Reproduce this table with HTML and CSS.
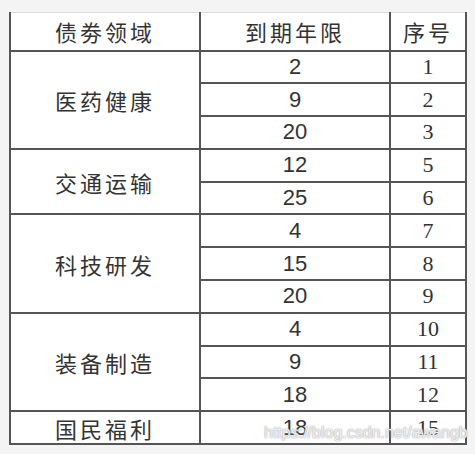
FILE: index.html
```html
<!DOCTYPE html>
<html>
<head>
<meta charset="utf-8">
<link rel="stylesheet" href="styles.css">
</head>
<body>
<div class="frame">
  <table class="grid">
    <colgroup><col class="c1"><col class="c2"><col class="c3"></colgroup>
    <thead>
      <tr class="head"><th>债劵领域</th><th>到期年限</th><th>序号</th></tr>
    </thead>
    <tbody>
      <tr><td class="area" rowspan="3">医药健康</td><td class="yrs">2</td><td class="no">1</td></tr>
      <tr><td class="yrs">9</td><td class="no">2</td></tr>
      <tr><td class="yrs">20</td><td class="no">3</td></tr>
      <tr><td class="area" rowspan="2">交通运输</td><td class="yrs">12</td><td class="no">5</td></tr>
      <tr><td class="yrs">25</td><td class="no">6</td></tr>
      <tr><td class="area" rowspan="3">科技研发</td><td class="yrs">4</td><td class="no">7</td></tr>
      <tr><td class="yrs">15</td><td class="no">8</td></tr>
      <tr><td class="yrs">20</td><td class="no">9</td></tr>
      <tr><td class="area" rowspan="3">装备制造</td><td class="yrs">4</td><td class="no">10</td></tr>
      <tr><td class="yrs">9</td><td class="no">11</td></tr>
      <tr><td class="yrs">18</td><td class="no">12</td></tr>
      <tr><td class="area">国民福利</td><td class="yrs">18</td><td class="no">15</td></tr>
    </tbody>
  </table>
  <div class="mark">https://blog.csdn.net/awangb</div>
</div>
</body>
</html>
```

FILE: styles.css
```css
html, body {
  margin: 0;
  padding: 0;
  background: #f4f4f4;
}
.frame {
  position: relative;
  width: 475px;
  height: 454px;
  padding: 12px 0 0 9px;
  box-sizing: border-box;
}
.grid {
  border-collapse: collapse;
  table-layout: fixed;
  width: 456px;
  background: #fff;
  color: #333;
  border-left: 2px solid #555;
  border-right: 2px solid #555;
  border-bottom: 2px solid #555;
  border-top: 1px solid #ddd;
}
.c1 { width: 190px; }
.c2 { width: 190px; }
.c3 { width: 76px; }
.grid th, .grid td {
  padding: 0;
  text-align: center;
  vertical-align: middle;
  border: 2px solid #555;
}
.grid thead th { border-top: none; }
.head { height: 38px; }
.grid tbody tr { height: 32.8px; }
.grid th, .area {
  font-family: "Noto Sans CJK SC", sans-serif;
  font-weight: 400;
  font-size: 22px;
  letter-spacing: 3px;
  line-height: 1;
}
.yrs {
  font-family: "Liberation Sans", Arial, sans-serif;
  font-size: 22px;
  line-height: 1;
}
.no {
  font-family: "Liberation Serif", serif;
  font-size: 22px;
  line-height: 1;
}
.mark {
  position: absolute;
  left: 264px;
  top: 424px;
  font-family: "Liberation Sans", Arial, sans-serif;
  font-size: 16px;
  color: rgba(255, 255, 255, 0.85);
  text-shadow: 0 0 1px #999, 0 0 2px #bbb;
  white-space: nowrap;
}
```
